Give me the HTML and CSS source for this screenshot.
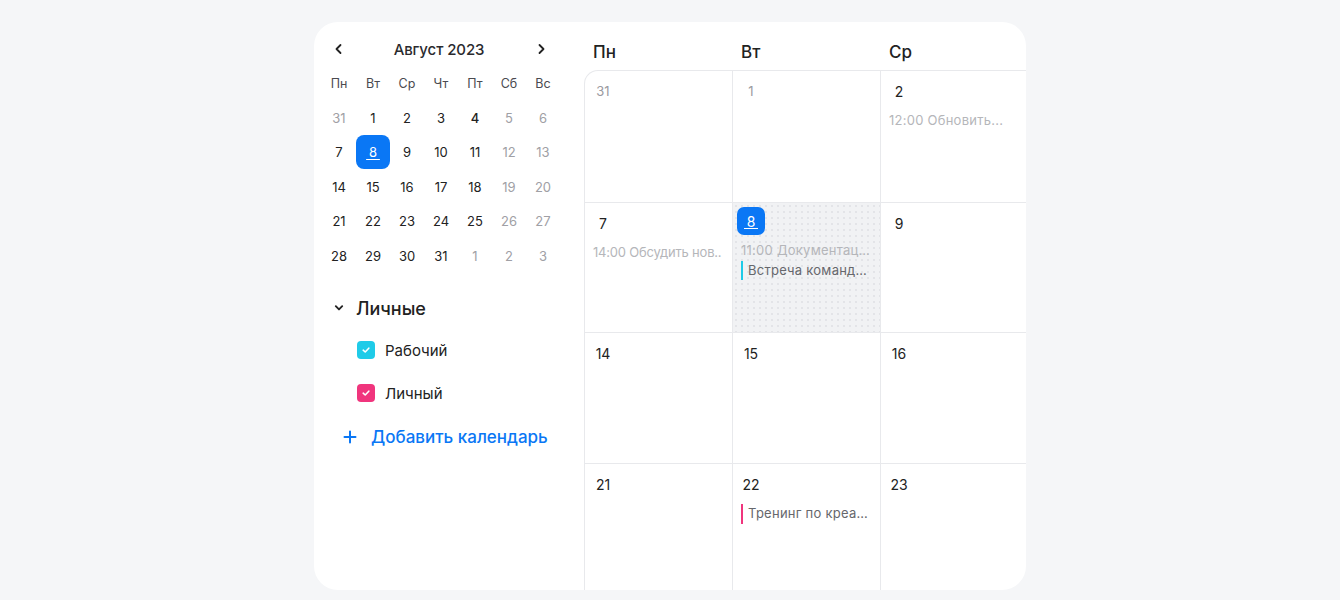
FILE: index.html
```html
<!DOCTYPE html>
<html lang="ru">
<head>
<meta charset="utf-8">
<title>Календарь</title>
<link rel="stylesheet" href="styles.css">
</head>
<body>
<div class="page">
  <div class="card">
    <aside class="side">
      <div class="mini">
        <div class="mini-head">
          <span class="arrow"><svg width="12" height="12" viewBox="0 0 12 12"><path d="M7.5 2 L3.5 6 L7.5 10" fill="none" stroke="#222" stroke-width="1.8" stroke-linecap="round" stroke-linejoin="round"/></svg></span>
          <span class="mini-title">Август 2023</span>
          <span class="arrow"><svg width="12" height="12" viewBox="0 0 12 12"><path d="M4.5 2 L8.5 6 L4.5 10" fill="none" stroke="#222" stroke-width="1.8" stroke-linecap="round" stroke-linejoin="round"/></svg></span>
        </div>
        <div class="mini-grid">
          <span class="wd">Пн</span><span class="wd">Вт</span><span class="wd">Ср</span><span class="wd">Чт</span><span class="wd">Пт</span><span class="wd">Сб</span><span class="wd">Вс</span>
          <span class="d off">31</span><span class="d">1</span><span class="d">2</span><span class="d">3</span><span class="d strong">4</span><span class="d off">5</span><span class="d off">6</span>
          <span class="d">7</span><span class="d"><span class="sel">8</span></span><span class="d">9</span><span class="d">10</span><span class="d">11</span><span class="d off">12</span><span class="d off">13</span>
          <span class="d">14</span><span class="d">15</span><span class="d">16</span><span class="d">17</span><span class="d">18</span><span class="d off">19</span><span class="d off">20</span>
          <span class="d">21</span><span class="d">22</span><span class="d">23</span><span class="d">24</span><span class="d">25</span><span class="d off">26</span><span class="d off">27</span>
          <span class="d">28</span><span class="d">29</span><span class="d">30</span><span class="d">31</span><span class="d off">1</span><span class="d off">2</span><span class="d off">3</span>
        </div>
      </div>
      <div class="group">
        <div class="group-head">
          <span class="chev"><svg width="10" height="10" viewBox="0 0 10 10"><path d="M1.8 3.2 L5 6.4 L8.2 3.2" fill="none" stroke="#222" stroke-width="1.9" stroke-linecap="round" stroke-linejoin="round"/></svg></span>
          <span class="group-title">Личные</span>
        </div>
        <div class="cal-item first">
          <span class="check cyan"><svg width="10" height="10" viewBox="0 0 10 10"><path d="M2.2 5.2 L4.2 7 L7.8 3.2" fill="none" stroke="#fff" stroke-width="1.6" stroke-linecap="round" stroke-linejoin="round"/></svg></span>
          <span class="cal-name">Рабочий</span>
        </div>
        <div class="cal-item">
          <span class="check pink"><svg width="10" height="10" viewBox="0 0 10 10"><path d="M2.2 5.2 L4.2 7 L7.8 3.2" fill="none" stroke="#fff" stroke-width="1.6" stroke-linecap="round" stroke-linejoin="round"/></svg></span>
          <span class="cal-name">Личный</span>
        </div>
        <div class="add">
          <span class="plus"><svg width="14" height="14" viewBox="0 0 14 14"><path d="M7 1.5 V12.5 M1.5 7 H12.5" stroke="#0a77f5" stroke-width="2" stroke-linecap="round"/></svg></span>
          <span class="add-text">Добавить календарь</span>
        </div>
      </div>
    </aside>
    <main class="month">
      <div class="week-head">
        <span class="wh">Пн</span><span class="wh">Вт</span><span class="wh">Ср</span>
      </div>
      <div class="grid">
        <div class="cell"><span class="num off">31</span></div>
        <div class="cell"><span class="num off">1</span></div>
        <div class="cell"><span class="num">2</span><div class="ev dim">12:00 Обновить...</div></div>

        <div class="cell"><span class="num">7</span><div class="ev dim tight">14:00 Обсудить нов..</div></div>
        <div class="cell today"><span class="num badge">8</span><div class="ev dim">11:00 Документация</div><div class="ev bar cyanbar">Встреча команды проекта</div></div>
        <div class="cell"><span class="num">9</span></div>

        <div class="cell"><span class="num">14</span></div>
        <div class="cell"><span class="num">15</span></div>
        <div class="cell"><span class="num">16</span></div>

        <div class="cell"><span class="num">21</span></div>
        <div class="cell"><span class="num">22</span><div class="ev bar pinkbar">Тренинг по креативности</div></div>
        <div class="cell"><span class="num">23</span></div>
      </div>
    </main>
  </div>
</div>
</body>
</html>
```
FILE: styles.css
```css
* { box-sizing: border-box; }
html, body { margin: 0; padding: 0; }
body {
  background: #f5f6f8;
  font-family: Inter, "Noto Sans", "Liberation Sans", sans-serif;
  color: #222;
  width: 1340px;
  height: 600px;
  overflow: hidden;
}
.page { padding-top: 22px; padding-left: 314px; }
.card {
  width: 712px;
  height: 568px;
  background: #fff;
  border-radius: 24px;
  overflow: hidden;
  display: flex;
}
.side { width: 270px; flex: none; padding: 10px 0 0 8px; }
.mini-head {
  display: grid;
  grid-template-columns: 34px 1fr 38px;
  width: 238px;
  height: 34px;
  align-items: center;
}
.arrow { display: flex; justify-content: center; align-items: center; }
.mini-title { text-align: center; font-size: 15px; font-weight: 500; letter-spacing: -0.1px; color: #2a2a2e; }
.mini-grid {
  display: grid;
  grid-template-columns: repeat(7, 34px);
  grid-auto-rows: 34.5px;
}
.wd, .d {
  display: flex; align-items: center; justify-content: center;
  font-size: 13px;
}
.wd { font-size: 12.5px; color: #4a4a50; }
.d { color: #222; }
.d.off { color: #a0a0a5; }
.d.strong { font-weight: 500; }
.sel {
  width: 34px; height: 34px;
  background: #0a77f5;
  color: #fff;
  border-radius: 8px;
  display: flex; align-items: center; justify-content: center;
  position: relative;
}
.sel::after {
  content: "";
  position: absolute;
  left: 10px; right: 10px; bottom: 9px;
  height: 1.5px;
  background: #fff;
  border-radius: 1px;
}
.group { margin-top: 18px; padding-left: 15px; }
.group-head { display: flex; align-items: center; height: 34px; }
.chev { width: 34px; display: flex; align-items: center; padding-left: 12px; margin-left: -15px; }
.group-title { font-size: 18px; font-weight: 500; color: #222; }
.cal-item { display: flex; align-items: center; height: 43px; padding-left: 20px; }
.cal-item.first { margin-top: 3.5px; }
.check {
  width: 18px; height: 18px; border-radius: 4px;
  display: flex; align-items: center; justify-content: center;
}
.check.cyan { background: #1fcbe8; }
.check.pink { background: #f0357d; }
.cal-name { margin-left: 10px; font-size: 15px; color: #222; }
.add { display: flex; align-items: center; height: 44px; padding-left: 6px; }
.plus { display: flex; width: 14px; }
.add-text { margin-left: 14px; font-size: 17px; font-weight: 500; color: #0a77f5; }

.month { flex: none; width: 445px; }
.week-head { display: flex; height: 48px; }
.wh { width: 148px; padding: 20px 0 0 9px; font-size: 17px; font-weight: 500; color: #222; }
.grid {
  display: grid;
  grid-template-columns: repeat(3, 148px);
  grid-template-rows: 132px 130px 131px 128px;
  border-top: 1px solid #e8e9ec;
  border-left: 1px solid #e8e9ec;
  border-top-left-radius: 14px;
  overflow: hidden;
  width: 445px;
}
.cell {
  border-right: 1px solid #e8e9ec;
  border-bottom: 1px solid #e8e9ec;
  padding: 6px 8px 0 4px;
  min-width: 0;
}
.cell.today {
  background-color: #f1f2f4;
  background-image: radial-gradient(circle, #e2e3e7 0.7px, transparent 0.9px);
  background-size: 6px 6px;
}
.num {
  display: flex; align-items: center; justify-content: center;
  width: 28px; height: 28px;
  font-size: 14px; color: #222;
}
.num.off { color: #9a9aa0; font-size: 13px; }
.num.badge {
  background: #0a77f5; color: #fff; border-radius: 7px; position: relative;
  margin-top: -2px; margin-bottom: 2px;
}
.num.badge::after {
  content: ""; position: absolute; left: 7px; right: 7px; bottom: 6px;
  height: 1.5px; background: #fff;
}
.ev {
  margin-left: 4px;
  height: 19.5px; line-height: 19.5px;
  font-size: 13px;
  letter-spacing: 0.25px;
  white-space: nowrap; overflow: hidden; text-overflow: ellipsis;
}
.ev.tight { letter-spacing: -0.2px; }
.num + .ev { margin-top: 6px; }
.ev.dim { color: #b5b6ba; }
.ev.bar { color: #66676c; padding-left: 5px; border-left: 2px solid; }
.ev.cyanbar { border-left-color: #1fcbe8; }
.ev.pinkbar { border-left-color: #f0357d; }
```
